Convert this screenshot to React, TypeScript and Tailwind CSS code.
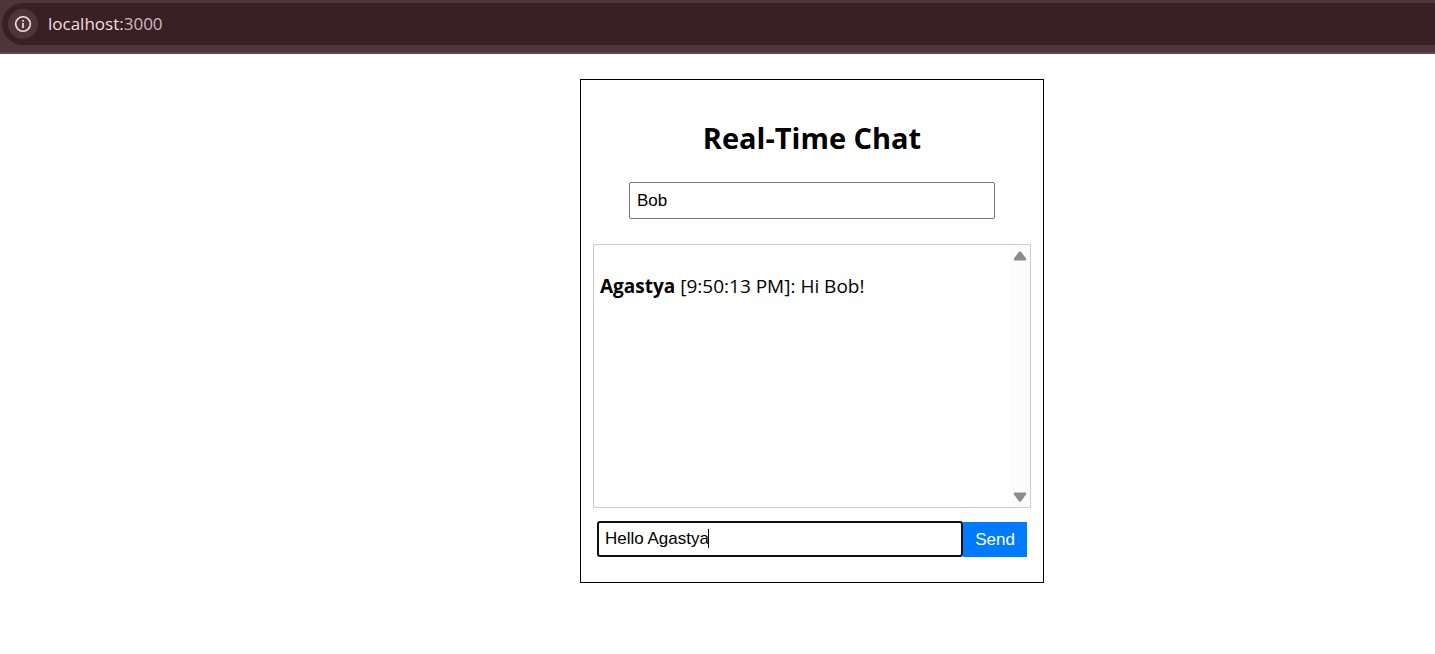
import { useState } from "react";

type Message = { user: string; time: string; text: string };

const messages: Message[] = [{ user: "Agastya", time: "9:50:13 PM", text: "Hi Bob!" }];

function AddressBar() {
  return (
    <header className="border-b-2 border-[#5a4a4b] bg-[#4f353a] pt-[3px] pb-[7px] pl-[2px]">
      <div className="flex h-[42px] items-center gap-[10px] rounded-l-full bg-[#382025] pl-[6px]">
        <button
          type="button"
          aria-label="View site information"
          className="flex size-[30px] items-center justify-center rounded-full bg-[#4f353a]"
        >
          <svg width="18" height="18" viewBox="0 0 18 18" fill="none" aria-hidden="true">
            <circle cx="9" cy="9" r="7.3" stroke="#f3dfe1" strokeWidth="1.6" />
            <path d="M9 8v5M9 5v1.7" stroke="#f3dfe1" strokeWidth="1.7" />
          </svg>
        </button>
        <a href="#" className="font-['Open_Sans','Noto_Sans',sans-serif] text-[17px] leading-6 text-[#f1dfe1]">
          localhost:<span className="text-[#cdbabd]">3000</span>
        </a>
      </div>
    </header>
  );
}

function Scrollbar() {
  return (
    <div className="flex w-[19px] flex-col items-center justify-between bg-[#fbfbfb] pt-[5px] pb-1" aria-hidden="true">
      <svg width="15" height="12" viewBox="0 0 15 12">
        <path d="M6 1.8Q7 .8 8 1.8L13 8.4Q13.8 10.6 12 10.6H2Q.2 10.6 1 8.4Z" fill="#8b8b8b" />
      </svg>
      <svg width="15" height="12" viewBox="0 0 15 12">
        <path d="M6 10.2Q7 11.2 8 10.2L13 3.6Q13.8 1.4 12 1.4H2Q.2 1.4 1 3.6Z" fill="#8b8b8b" />
      </svg>
    </div>
  );
}

export default function App() {
  const [name, setName] = useState("Bob");
  const [draft, setDraft] = useState("Hello Agastya");

  return (
    <div className="bg-white font-['Open_Sans','Noto_Sans',sans-serif] text-black">
      <AddressBar />
      <main className="flex justify-center pt-[25px] pl-[189px]">
        <section className="flex w-full max-w-[464px] flex-col border border-black px-3 pt-[38px] pb-[25px]">
          <h2 className="text-center text-[29px] leading-[40px] font-bold">Real-Time Chat</h2>
          <input
            type="text"
            aria-label="Your name"
            value={name}
            onChange={(e) => setName(e.target.value)}
            className="mx-9 mt-6 h-[37px] rounded-[2px] border border-[#767676] px-[7px] font-['Liberation_Sans',sans-serif] text-[17px] outline-none"
          />
          <div className="mt-[25px] flex h-[264px] border border-[#cccccc]">
            <div className="flex-1 px-[6px] pt-[28px]">
              {messages.map((m) => (
                <p key={m.time} className="text-[19px] leading-[26px]">
                  <strong>{m.user}</strong> [{m.time}]: {m.text}
                </p>
              ))}
            </div>
            <Scrollbar />
          </div>
          <form className="mx-1 mt-[13px] flex items-end" onSubmit={(e) => e.preventDefault()}>
            <div className="relative flex-1">
              <input
                type="text"
                aria-label="Message"
                value={draft}
                onChange={(e) => setDraft(e.target.value)}
                className="block h-9 w-full rounded-[3px] border-2 border-[#101010] px-[6px] font-['Liberation_Sans',sans-serif] text-[17px] outline-none"
              />
              <span className="absolute top-2 left-[111px] h-[19px] w-px bg-black" aria-hidden="true" />
            </div>
            <button
              type="submit"
              className="h-[35px] w-16 bg-[#007bff] font-['Liberation_Sans',sans-serif] text-[17px] leading-6 text-white"
            >
              Send
            </button>
          </form>
        </section>
      </main>
    </div>
  );
}
